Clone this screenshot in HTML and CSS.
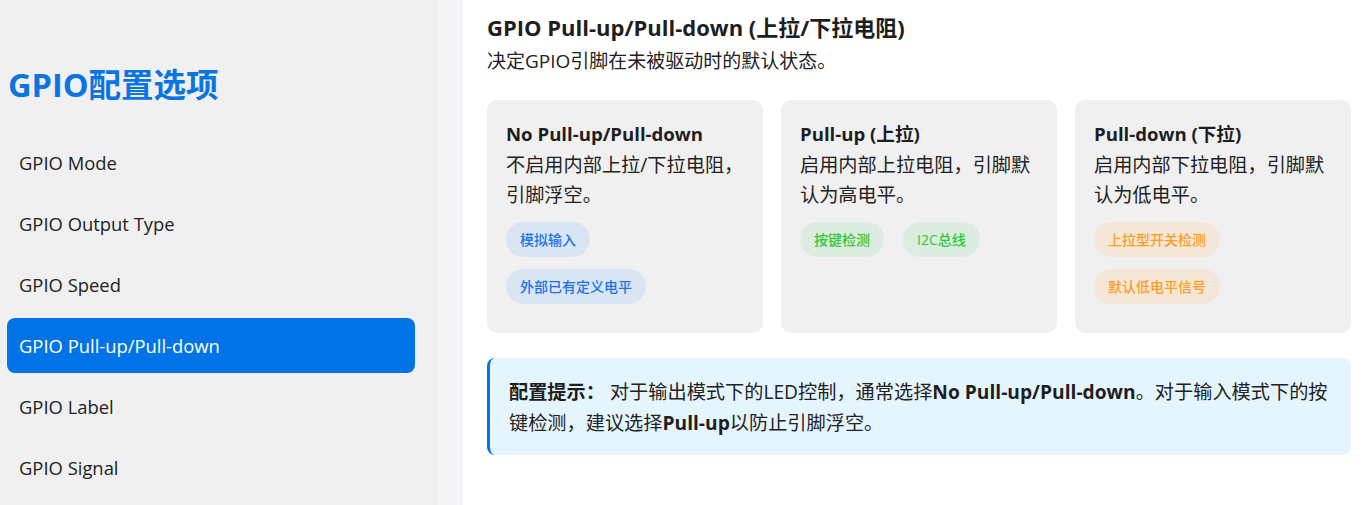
FILE: index.html
```html
<!DOCTYPE html>
<html lang="zh-CN">
<head>
<meta charset="utf-8">
<title>GPIO配置选项</title>
<link rel="stylesheet" href="styles.css">
</head>
<body>
<div class="layout">
  <aside class="sidebar">
    <h1 class="brand">GPIO配置选项</h1>
    <nav class="nav">
      <div class="nav-item">GPIO Mode</div>
      <div class="nav-item">GPIO Output Type</div>
      <div class="nav-item">GPIO Speed</div>
      <div class="nav-item active">GPIO Pull-up/Pull-down</div>
      <div class="nav-item">GPIO Label</div>
      <div class="nav-item">GPIO Signal</div>
    </nav>
  </aside>
  <main class="main">
    <h2 class="page-title">GPIO Pull-up/Pull-down (上拉/下拉电阻)</h2>
    <p class="page-sub">决定GPIO引脚在未被驱动时的默认状态。</p>
    <div class="cards">
      <div class="card">
        <div class="card-title">No Pull-up/Pull-down</div>
        <div class="card-desc">不启用内部上拉/下拉电阻，引脚浮空。</div>
        <div class="tags">
          <span class="tag tag-blue">模拟输入</span>
          <span class="tag tag-blue">外部已有定义电平</span>
        </div>
      </div>
      <div class="card">
        <div class="card-title">Pull-up (上拉)</div>
        <div class="card-desc">启用内部上拉电阻，引脚默认为高电平。</div>
        <div class="tags">
          <span class="tag tag-green">按键检测</span>
          <span class="tag tag-green">I2C总线</span>
        </div>
      </div>
      <div class="card">
        <div class="card-title">Pull-down (下拉)</div>
        <div class="card-desc">启用内部下拉电阻，引脚默认为低电平。</div>
        <div class="tags">
          <span class="tag tag-orange">上拉型开关检测</span>
          <span class="tag tag-orange">默认低电平信号</span>
        </div>
      </div>
    </div>
    <div class="tip"><b>配置提示：</b> 对于输出模式下的LED控制，通常选择<b>No Pull-up/Pull-down</b>。对于输入模式下的按键检测，建议选择<b>Pull-up</b>以防止引脚浮空。</div>
  </main>
</div>
</body>
</html>
```

FILE: styles.css
```css
* { box-sizing: border-box; }
html, body {
  margin: 0;
  padding: 0;
  height: 505px;
  overflow: hidden;
  background: #ffffff;
  font-family: "Open Sans", "Noto Sans CJK SC", sans-serif;
  color: #222222;
}
.layout {
  display: flex;
  height: 505px;
}
.sidebar {
  width: 463px;
  flex: none;
  background: #f0f0f0;
  border-right: 24px solid #f4f4f6;
  padding: 66px 24px 0 7px;
}
.brand {
  margin: 0 0 31px 1px;
  font-size: 32.5px;
  line-height: 38px;
  font-weight: 700;
  color: #0a74e2;
}
.nav {
  display: flex;
  flex-direction: column;
  gap: 6px;
}
.nav-item {
  height: 55px;
  display: flex;
  align-items: center;
  padding: 0 12px;
  font-size: 18.4px;
  color: #222222;
  border-radius: 8px;
}
.nav-item.active {
  background: #0073e6;
  color: #ffffff;
}
.main {
  flex: 1;
  padding: 12px 18px 0 24px;
}
.page-title {
  margin: 0 0 4px;
  font-size: 22px;
  line-height: 30px;
  font-weight: 700;
  color: #1e1e1e;
}
.page-sub {
  margin: 0 0 24px;
  font-size: 19px;
  line-height: 30px;
  color: #222222;
}
.cards {
  display: grid;
  grid-template-columns: repeat(3, 1fr);
  gap: 18px;
}
.card {
  background: #f0f0f0;
  border-radius: 10px;
  padding: 20px 19px 29px;
}
.card-title {
  font-size: 18.6px;
  line-height: 27px;
  font-weight: 700;
  color: #1e1e1e;
  margin-bottom: 3px;
}
.card-desc {
  font-size: 19.2px;
  line-height: 30px;
  color: #222222;
}
.tags {
  display: flex;
  flex-wrap: wrap;
  gap: 12px 19px;
  margin-top: 12px;
}
.tag {
  display: inline-block;
  height: 35px;
  line-height: 35px;
  padding: 0 14px;
  border-radius: 18px;
  font-size: 14px;
  font-weight: 500;
}
.tag-blue { background: #d9e5f2; color: #1a73e8; }
.tag-green { background: #dcece0; color: #2fc73b; }
.tag-orange { background: #f4e6d8; color: #ff9d1c; }
.tip {
  margin-top: 25px;
  background: #e5f5fd;
  border-left: 3px solid #0073e6;
  border-radius: 8px;
  padding: 18px 19px 17px;
  font-size: 19.2px;
  line-height: 31px;
  color: #222222;
}
.tip b { font-weight: 700; color: #1e1e1e; }
```
